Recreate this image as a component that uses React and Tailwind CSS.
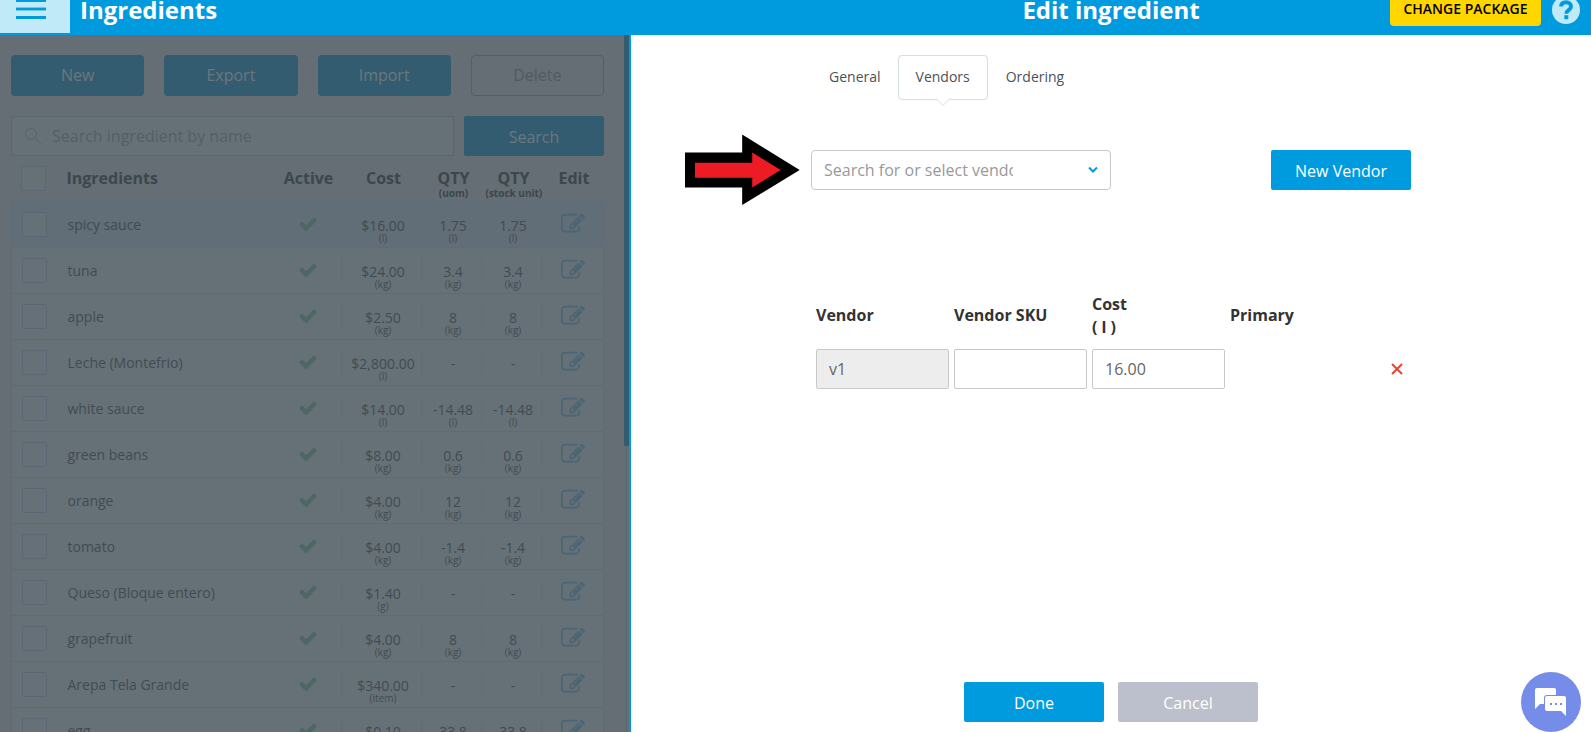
// src/App.jsx
import React, { useState } from 'react'

const INGREDIENTS = [
  { name: 'spicy sauce', cost: '$16.00', unit: 'l', qty: '1.75' },
  { name: 'tuna', cost: '$24.00', unit: 'kg', qty: '3.4' },
  { name: 'apple', cost: '$2.50', unit: 'kg', qty: '8' },
  { name: 'Leche (Montefrio)', cost: '$2,800.00', unit: 'l', qty: null },
  { name: 'white sauce', cost: '$14.00', unit: 'l', qty: '-14.48' },
  { name: 'green beans', cost: '$8.00', unit: 'kg', qty: '0.6' },
  { name: 'orange', cost: '$4.00', unit: 'kg', qty: '12' },
  { name: 'tomato', cost: '$4.00', unit: 'kg', qty: '-1.4' },
  { name: 'Queso (Bloque entero)', cost: '$1.40', unit: 'g', qty: null },
  { name: 'grapefruit', cost: '$4.00', unit: 'kg', qty: '8' },
  { name: 'Arepa Tela Grande', cost: '$340.00', unit: 'item', qty: null },
  { name: 'egg', cost: '$0.10', unit: 'item', qty: '33.8' },
]

function CheckIcon() {
  return (
    <svg viewBox="0 0 1792 1792" className="mx-auto block size-5 fill-[#4b6862]" aria-label="Active">
      <path d="M1671 566q0 40-28 68l-724 724-136 136q-28 28-68 28t-68-28l-136-136-362-362q-28-28-28-68t28-68l136-136q28-28 68-28t68 28l294 295 656-657q28-28 68-28t68 28l136 136q28 28 28 68z" />
    </svg>
  )
}

function EditIcon() {
  return (
    <svg viewBox="0 0 1792 1792" className="block size-6 fill-[#4a6576]" aria-hidden="true">
      <path d="M888 1184l116-116-152-152-116 116v56h96v96h56zm440-720q-16-16-33 1l-350 350q-17 17-1 33t33-1l350-350q17-17 1-33zm80 594v190q0 119-84.5 203.5t-203.5 84.5h-832q-119 0-203.5-84.5t-84.5-203.5v-832q0-119 84.5-203.5t203.5-84.5h832q63 0 117 25 15 7 18 23 3 17-9 29l-49 49q-14 14-32 8-23-6-45-6h-832q-66 0-113 47t-47 113v832q0 66 47 113t113 47h832q66 0 113-47t47-113v-126q0-13 9-22l64-64q15-15 35-7t20 29zm-96-738l288 288-672 672h-288v-288zm444 132l-92 92-288-288 92-92q28-28 68-28t68 28l152 152q28 28 28 68t-28 68z" />
    </svg>
  )
}

function Header() {
  return (
    <header className="grid h-[35px] grid-cols-[631fr_960fr] bg-[#009bdf] text-white">
      <div className="flex items-start">
        <button aria-label="Menu" className="h-[33px] w-[70px] bg-[#c0eaf8] pl-4">
          <svg viewBox="0 0 30 33" className="block h-[33px] w-[30px] fill-[#009bdf]">
            <path d="M0 0h30v2H0zM0 8h30v2H0zM0 16h30v3H0z" />
            <path d="M0 7h30v1H0zM0 10h30v1H0z" fill="#6cc8ec" />
          </svg>
        </button>
        <h1 className="pl-[10px] text-2xl leading-5 font-bold">Ingredients</h1>
      </div>
      <div className="relative flex justify-center">
        <h2 className="text-2xl leading-5 font-bold">Edit ingredient</h2>
        <div className="absolute top-0 right-[11px] flex items-start gap-[11px]">
          <button className="h-[26px] w-[151px] rounded-b bg-[#ffd600] pb-2 text-sm leading-[18px] font-semibold text-black">
            CHANGE PACKAGE
          </button>
          <button aria-label="Help" className="-mt-1 flex size-7 items-center justify-center rounded-full bg-[#c0eaf8]">
            <svg viewBox="0 0 28 28" className="size-7 fill-none stroke-[#009bdf] stroke-4">
              <path d="M9 10.500c.3-3 2.500-4.200 5-4.200 3 0 5 1.700 5 4.200 0 3.800-4.700 3.400-4.700 7.200" />
              <path d="M14.300 19.200v4" />
            </svg>
          </button>
        </div>
      </div>
    </header>
  )
}

function Box({ label }) {
  return (
    <input
      type="checkbox"
      aria-label={label}
      className="block size-[25px] appearance-none rounded-xs border border-[#5a6775] bg-[#667177]"
    />
  )
}

function Value({ value, unit }) {
  return (
    <td className="p-0 pt-[10px] text-center align-top">
      <div className="flex h-[25px] items-start justify-center border-r border-[#616d73] pt-[6px] pl-1 text-sm leading-4">
        {value}
      </div>
      {unit && <div className="-mt-[3px] pl-[3px] text-[10px] leading-[8px]">({unit})</div>}
    </td>
  )
}

function IngredientRow({ item, selected }) {
  return (
    <tr className={selected ? 'h-[46px] border border-[#606c74] bg-[#616d77]' : 'h-[46px] border border-[#606b71] bg-[#667177]'}>
      <td className="p-0 pl-[10px]">
        <Box label={'Select ' + item.name} />
      </td>
      <td className="p-0 pt-[2px] pl-px text-sm">{item.name}</td>
      <td className="p-0">
        <div className="flex h-[25px] items-center border-r border-[#616d73]">
          <CheckIcon />
        </div>
      </td>
      <Value value={item.cost} unit={item.unit} />
      <Value value={item.qty || '-'} unit={item.qty && item.unit} />
      <Value value={item.qty || '-'} unit={item.qty && item.unit} />
      <td className="p-0 pl-[19px]">
        <button aria-label={'Edit ' + item.name} className="block">
          <EditIcon />
        </button>
      </td>
    </tr>
  )
}

function IngredientsPanel() {
  const actions = ['New', 'Export', 'Import']
  return (
    <section className="flex min-h-0 overflow-hidden border-r-2 border-[#009bdf] bg-[#646e74] text-[#414b52]">
      <div className="min-w-0 flex-1 pt-5 pr-5 pl-[11px]">
        <div className="grid grid-cols-4 gap-5">
          {actions.map((a) => (
            <button key={a} className="h-[41px] rounded bg-[#335c70] pb-px text-base text-[#6c777d]">
              {a}
            </button>
          ))}
          <button className="h-[41px] rounded border border-[#69565a] bg-[#656d75] pb-px text-base text-[#505b62]">Delete</button>
        </div>
        <div className="mt-5 flex gap-[10px]">
          <label className="flex h-10 flex-1 items-center rounded-xs border border-[#5c676d] bg-[#667177] pl-3">
            <svg viewBox="0 0 18 18" className="size-[18px] fill-none stroke-[#566270]">
              <circle cx="7" cy="7" r="5.500" />
              <path d="M11 11l6 6" />
            </svg>
            <input
              type="text"
              aria-label="Search ingredient by name"
              placeholder="Search ingredient by name"
              className="ml-[10px] min-w-0 flex-1 bg-transparent text-base outline-none placeholder:text-[#535f66]"
            />
          </label>
          <button className="h-10 w-[140px] rounded-xs bg-[#335c70] pt-[2px] text-base text-[#6c777d]">Search</button>
        </div>
        <table className="mt-[10px] w-full table-fixed border-collapse">
          <colgroup>
            <col className="w-[55px]" />
            <col />
            <col className="w-[67px]" />
            <col className="w-[80px]" />
            <col className="w-[60px]" />
            <col className="w-[60px]" />
            <col className="w-[62px]" />
          </colgroup>
          <thead className="text-base leading-6 font-bold text-[#3c464d]">
            <tr className="h-[35px] align-top">
              <th className="p-0 pl-[9px]">
                <Box label="Select all" />
              </th>
              <th className="p-0 text-left">Ingredients</th>
              <th className="p-0 pl-px">Active</th>
              <th className="p-0 pl-1">Cost</th>
              <th className="p-0 pl-1">
                <div className="leading-5 pt-[2px]">QTY</div>
                <div className="-mt-px text-[10px] leading-3">(uom)</div>
              </th>
              <th className="p-0 pl-1">
                <div className="leading-5 pt-[2px]">QTY</div>
                <div className="-mt-px text-[10px] leading-3 whitespace-nowrap">(stock unit)</div>
              </th>
              <th className="p-0 pl-[3px]">Edit</th>
            </tr>
          </thead>
          <tbody>
            {INGREDIENTS.map((item, i) => (
              <IngredientRow key={item.name} item={item} selected={i === 0} />
            ))}
          </tbody>
        </table>
      </div>
      {/* scrollbar */}
      <div className="w-[5px] shrink-0">
        <div className="h-[59%] bg-[#335c70]" />
        <div className="ml-[2px] h-[41%] border-l border-[#5c676d]" />
      </div>
    </section>
  )
}

function VendorsPanel() {
  const [sku, setSku] = useState('')
  const [cost, setCost] = useState('16.00')
  const field = 'h-10 w-full min-w-0 rounded-xs border border-[#c8c8c8] px-3 text-base text-[#666] outline-none'

  return (
    <section className="flex min-h-0 flex-col items-center bg-white pb-[10px]">
      <div className="flex w-full max-w-[600px] flex-1 flex-col">
        <nav className="mt-5 flex text-sm text-[#4a5256]">
          <button className="h-[45px] pr-[17px] pb-[2px] pl-[18px]">General</button>
          <button className="relative h-[45px] rounded border border-[#d3dfe1] px-[17px] pb-[2px]">
            Vendors
            <svg viewBox="0 0 16 9" className="absolute top-full left-1/2 -mt-px h-[9px] w-4 -translate-x-1/2">
              <path d="M0.500 0h15L8 8z" fill="#fff" />
              <path d="M1 .5l7 7 7-7" fill="none" stroke="#d3dfe1" />
            </svg>
          </button>
          <button className="h-[45px] px-[18px] pb-[2px]">Ordering</button>
        </nav>

        <div className="mt-[50px] flex justify-between">
          <div className="relative">
            <label className="flex h-10 w-[300px] items-center justify-between rounded border border-[#c8c8c8] pr-3 pl-3">
              <input
                type="text"
                role="combobox"
                aria-expanded="false"
                aria-label="Vendor"
                placeholder="Search for or select vendor"
                className="w-[189px] bg-transparent text-base outline-none placeholder:text-[#999]"
              />
              <svg viewBox="0 0 10 8" className="h-2 w-[10px] fill-none stroke-[#009bdf] stroke-2">
                <path d="M1 1.500l4 4 4-4" />
              </svg>
            </label>
            {/* pointer to the vendor select */}
            <svg viewBox="0 0 344 212" className="absolute top-1/2 right-full mr-[11px] h-[71px] w-[115px] -translate-y-1/2">
              <path d="M0 54h171V0l172 106-172 105v-53H0z" fill="#000" />
              <path d="M30 84h171V54l85 52-85 52v-29H30z" fill="#ed1c24" />
            </svg>
          </div>
          <button className="h-10 w-[140px] rounded-xs bg-[#009bdf] pt-[2px] text-base text-white">New Vendor</button>
        </div>

        <table className="mt-[103px] w-full table-fixed border-separate border-spacing-x-[5px] border-spacing-y-0 text-[#333]">
          <colgroup>
            <col className="w-[133px]" />
            <col className="w-[133px]" />
            <col className="w-[133px]" />
            <col />
            <col className="w-5" />
          </colgroup>
          <thead>
            <tr className="h-[56px] text-left align-top text-base leading-[23px]">
              <th className="p-0 pt-[11px]">Vendor</th>
              <th className="p-0 pt-[11px]">Vendor SKU</th>
              <th className="p-0">
                Cost
                <br />( l )
              </th>
              <th className="p-0 pt-[11px]">Primary</th>
              <td className="p-0" />
            </tr>
          </thead>
          <tbody>
            <tr>
              <td className="p-0">
                <input aria-label="Vendor name" className={field + ' bg-[#ededed]'} value="v1" readOnly />
              </td>
              <td className="p-0">
                <input aria-label="Vendor SKU" className={field} value={sku} onChange={(e) => setSku(e.target.value)} />
              </td>
              <td className="p-0">
                <input aria-label="Cost" className={field} value={cost} onChange={(e) => setCost(e.target.value)} />
              </td>
              <td className="p-0" />
              <td className="p-0">
                <button aria-label="Remove vendor" className="ml-auto block pr-[3px]">
                  <svg viewBox="0 0 12 12" className="size-3 fill-none stroke-[#f04030] stroke-2">
                    <path d="M1 1l10 10M11 1L1 11" />
                  </svg>
                </button>
              </td>
            </tr>
          </tbody>
        </table>
      </div>

      <div className="flex gap-[14px]">
        <button className="h-10 w-[140px] rounded-xs bg-[#009bdf] pt-[2px] text-base text-white">Done</button>
        <button className="h-10 w-[140px] rounded-xs bg-[#bcc0cc] pt-[2px] text-base text-white">Cancel</button>
      </div>
    </section>
  )
}

export default function App() {
  return (
    <div className="flex h-screen flex-col overflow-hidden font-['Open_Sans',sans-serif]">
      <Header />
      <main className="grid min-h-0 flex-1 grid-cols-[631fr_960fr]">
        <IngredientsPanel />
        <VendorsPanel />
      </main>
      <button aria-label="Chat" className="fixed right-[10px] bottom-0 flex size-[60px] items-center justify-center rounded-full bg-[#768ce9]">
        <svg viewBox="0 0 32 28" className="h-7 w-8 fill-white">
          <path d="M2 0h17q2 0 2 2v5h-9q-3 0-3 3v6H5l-5 5V2q0-2 2-2z" />
          <path d="M12 8h17q2 0 2 2v18l-5-5H12q-2 0-2-2V10q0-2 2-2z" />
          <path d="M15 15h2v2h-2zM20 15h2v2h-2zM25 15h2v2h-2z" fill="#768ce9" />
        </svg>
      </button>
    </div>
  )
}
